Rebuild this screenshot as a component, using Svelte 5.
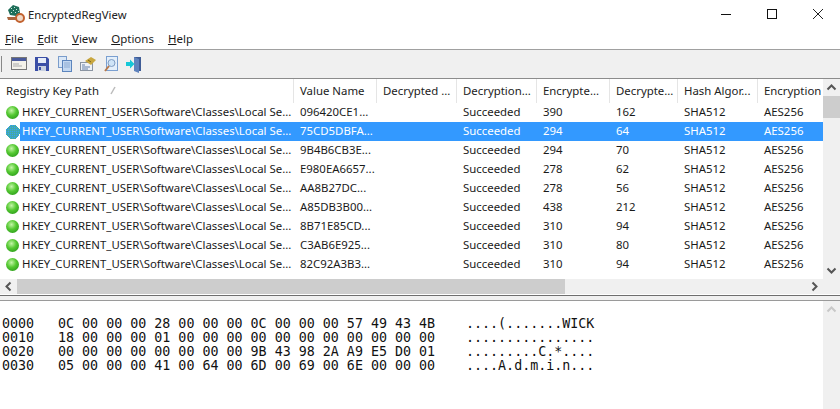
<script>
  const columns = [
    { label: 'Registry Key Path', width: 294 },
    { label: 'Value Name', width: 83 },
    { label: 'Decrypted ...', width: 80 },
    { label: 'Decryption...', width: 80 },
    { label: 'Encrypte...', width: 73 },
    { label: 'Decrypte...', width: 68 },
    { label: 'Hash Algor...', width: 80 },
    { label: 'Encryption', width: 65 }
  ];
  const keyPath = 'HKEY_CURRENT_USER\\Software\\Classes\\Local Se...';
  const rows = [
    ['096420CE1...', 390, 162],
    ['75CD5DBFA...', 294, 64],
    ['9B4B6CB3E...', 294, 70],
    ['E980EA6657...', 278, 62],
    ['AA8B27DC...', 278, 56],
    ['A85DB3B00...', 438, 212],
    ['8B71E85CD...', 310, 94],
    ['C3AB6E925...', 310, 80],
    ['82C92A3B3...', 310, 94]
  ];
  const menus = [
    ['F', 'ile'],
    ['E', 'dit'],
    ['V', 'iew'],
    ['O', 'ptions'],
    ['H', 'elp']
  ];
  const hex = [
    ['0000', '0C 00 00 00 28 00 00 00 0C 00 00 00 57 49 43 4B', '....(.......WICK'],
    ['0010', '18 00 00 00 01 00 00 00 00 00 00 00 00 00 00 00', '................'],
    ['0020', '00 00 00 00 00 00 00 00 9B 43 98 2A A9 E5 D0 01', '.........C.*....'],
    ['0030', '05 00 00 00 41 00 64 00 6D 00 69 00 6E 00 00 00', '....A.d.m.i.n...']
  ];
</script>

<div class="window">
  <header class="titlebar">
    <svg class="appicon" width="20" height="20" viewBox="0 0 20 20">
      <path d="M7 1l6 2 1 6-4 3-6-1-2-5z" fill="#1f6f5a" />
      <path d="M5 4h1v1H5zM8 3h1v1H8zM10 5h1v1h-1zM7 6h1v1H7zM5 8h1v1H5zM9 8h1v1H9zM12 7h1v1h-1z" fill="#cfe8dc" />
      <path d="M1 13h9v3H2z" fill="#a9663f" />
      <circle cx="14" cy="14" r="4" fill="#f0d9c8" stroke="#c2622f" stroke-width="2" />
    </svg>
    <span class="title">EncryptedRegView</span>
    <div class="winbtns">
      <svg width="12" height="12" viewBox="0 0 12 12"><path d="M1 6.500h10" stroke="#111" fill="none" /></svg>
      <svg width="12" height="12" viewBox="0 0 12 12"><rect x="1.500" y="1.500" width="9" height="9" stroke="#111" fill="none" /></svg>
      <svg width="12" height="12" viewBox="0 0 12 12"><path d="M1 1l10 10M11 1L1 11" stroke="#222" fill="none" /></svg>
    </div>
  </header>

  <nav class="menubar">
    {#each menus as m}
      <span class="menu"><u>{m[0]}</u>{m[1]}</span>
    {/each}
  </nav>

  <div class="toolbar">
    <span class="grip"></span>
    <svg width="18" height="18" viewBox="0 0 18 18">
      <rect x="1.500" y="2.500" width="15" height="12" fill="#f4f2ea" stroke="#777" />
      <rect x="2" y="3" width="14" height="3" fill="#4a5a9c" />
      <path d="M3 9h6M3 11h9" stroke="#aaa" />
    </svg>
    <svg width="18" height="18" viewBox="0 0 18 18">
      <path d="M2 2h12l2 2v12H2z" fill="#3a4ea6" />
      <rect x="5" y="3" width="8" height="5" fill="#e6ecf8" />
      <rect x="5" y="11" width="8" height="5" fill="#c8d0e0" />
      <rect x="6" y="12" width="2" height="3" fill="#3a4ea6" />
    </svg>
    <svg width="18" height="18" viewBox="0 0 18 18">
      <rect x="2.500" y="1.500" width="8" height="11" fill="#dbe8f7" stroke="#7a9ccb" />
      <rect x="6.500" y="5.500" width="9" height="11" fill="#c3d8f1" stroke="#5c85bd" />
      <path d="M8 8h6M8 10h6M8 12h6" stroke="#8dabd2" />
    </svg>
    <svg width="18" height="18" viewBox="0 0 18 18">
      <rect x="1.500" y="7.500" width="12" height="8" fill="#eef1f6" stroke="#8a94a1" />
      <path d="M3 10h3M3 12h8M3 14h6" stroke="#6480aa" />
      <path d="M6 6l6-4 5 3-5 5z" fill="#c9a73f" />
      <path d="M9 5l3 2" stroke="#7a6420" />
    </svg>
    <svg width="18" height="18" viewBox="0 0 18 18">
      <rect x="4.500" y="1.500" width="11" height="14" fill="#e4effa" stroke="#7a9fd0" />
      <circle cx="9.500" cy="8" r="3.500" fill="#cfe4f7" stroke="#7f9cc2" />
      <path d="M7 11l-4 5" stroke="#b8794a" stroke-width="2" />
    </svg>
    <svg width="18" height="18" viewBox="0 0 18 18">
      <path d="M9 2h7v14H9z" fill="#3f5c96" />
      <path d="M9 2l5 2v14l-5-2z" fill="#5f83bd" />
      <path d="M1 7h4V4.500L9.500 9 5 13.500V11H1z" fill="#16c8d8" />
    </svg>
  </div>

  <section class="listview">
    <div class="listmain">
      <div class="headrow">
        {#each columns as c, i}
          <div class="headcell" style="width: {c.width}px">
            <span>{c.label}</span>
            {#if i === 0}
              <svg class="sort" width="8" height="9" viewBox="0 0 8 9"><path d="M2 8l4-7" stroke="#bbb" stroke-width="1.500" fill="none" /></svg>
            {/if}
          </div>
        {/each}
      </div>
      {#each rows as r, i}
        <div class="row" class:selected={i === 1}>
          <div class="cell first" style="width: {columns[0].width}px">
            {#if i === 1}
              <svg class="ballsel" width="14" height="14" viewBox="0 0 14 14" shape-rendering="crispEdges">
                <defs>
                  <pattern id="dither" width="2" height="2" patternUnits="userSpaceOnUse">
                    <rect width="2" height="2" fill="#46b3a0" />
                    <rect width="1" height="1" fill="#3399ff" />
                    <rect x="1" y="1" width="1" height="1" fill="#3f9fb0" />
                  </pattern>
                </defs>
                <circle cx="7" cy="7" r="7" fill="url(#dither)" />
              </svg>
            {:else}
              <span class="ball"></span>
            {/if}
            <span class="keytext">{keyPath}</span>
          </div>
          <div class="cell" style="width: {columns[1].width}px">{r[0]}</div>
          <div class="cell" style="width: {columns[2].width}px"></div>
          <div class="cell" style="width: {columns[3].width}px">Succeeded</div>
          <div class="cell" style="width: {columns[4].width}px">{r[1]}</div>
          <div class="cell" style="width: {columns[5].width}px">{r[2]}</div>
          <div class="cell" style="width: {columns[6].width}px">SHA512</div>
          <div class="cell" style="width: {columns[7].width}px">AES256</div>
        </div>
      {/each}
    </div>
    <div class="vscroll">
      <svg class="arrow" width="17" height="17" viewBox="0 0 17 17"><path d="M4.500 10.500l4-4 4 4" stroke="#555" stroke-width="2" fill="none" /></svg>
      <div class="vthumb"></div>
      <div class="spacer"></div>
      <svg class="arrow" width="17" height="17" viewBox="0 0 17 17"><path d="M4.500 6.500l4 4 4-4" stroke="#555" stroke-width="2" fill="none" /></svg>
    </div>
  </section>

  <div class="hscroll">
    <svg class="arrow" width="17" height="15" viewBox="0 0 17 15"><path d="M10.500 3.500l-4 4 4 4" stroke="#555" stroke-width="2" fill="none" /></svg>
    <div class="hthumb"></div>
    <div class="spacer"></div>
    <svg class="arrow" width="17" height="15" viewBox="0 0 17 15"><path d="M6.500 3.500l4 4-4 4" stroke="#555" stroke-width="2" fill="none" /></svg>
    <div class="corner"></div>
  </div>

  <div class="splitter"></div>

  <section class="hexpane">
    <div class="hexlines">
      {#each hex as h}
        <div class="hexline"><span class="addr">{h[0]}</span><span class="bytes">{h[1]}</span><span>{h[2]}</span></div>
      {/each}
    </div>
    <div class="hexscroll">
      <svg class="arrow" width="17" height="17" viewBox="0 0 17 17"><path d="M4.500 10.500l4-4 4 4" stroke="#c8c8c8" stroke-width="2" fill="none" /></svg>
    </div>
  </section>
</div>

<style>
  :global(body) {
    margin: 0;
    background: #fff;
  }
  .window {
    width: 840px;
    height: 409px;
    display: flex;
    flex-direction: column;
    overflow: hidden;
    font-family: "Noto Sans", "Open Sans", sans-serif;
    font-size: 11.4px;
    color: #1a1a1a;
    background: #fff;
  }
  .titlebar {
    height: 28px;
    flex: none;
    display: flex;
    align-items: center;
    padding-left: 6px;
    box-sizing: border-box;
  }
  .appicon {
    margin-right: 2px;
  }
  .title {
    font-size: 11.3px;
    color: #222;
  }
  .winbtns {
    margin-left: auto;
    display: flex;
    gap: 34px;
    padding-right: 16px;
  }
  .menubar {
    height: 21px;
    flex: none;
    display: flex;
    align-items: center;
    padding-left: 5px;
    gap: 14px;
    border-bottom: 1px solid #a0a0a0;
    font-size: 11.5px;
  }
  .toolbar {
    height: 29px;
    flex: none;
    display: flex;
    align-items: center;
    gap: 5px;
    padding-left: 1px;
    background: #f0f0f0;
    border-bottom: 1px solid #8c8c8c;
    box-sizing: border-box;
  }
  .grip {
    width: 1px;
    height: 16px;
    background: #888;
    margin-right: 3px;
  }
  .listview {
    height: 200px;
    flex: none;
    display: flex;
  }
  .listmain {
    width: 823px;
    overflow: hidden;
  }
  .headrow {
    height: 24px;
    display: flex;
  }
  .headcell {
    flex: none;
    box-sizing: border-box;
    display: flex;
    align-items: center;
    padding: 0 0 2px 6px;
    border-right: 1px solid #e5e5e5;
    color: #222;
    white-space: nowrap;
    gap: 10px;
  }
  .headcell:last-child {
    border-right: none;
  }
  .sort {
    margin-top: 1px;
  }
  .row {
    height: 19px;
    display: flex;
    align-items: flex-start;
    white-space: nowrap;
    background: #fff;
  }
  .row.selected {
    background: #3399ff;
    color: #fff;
  }
  .cell {
    flex: none;
    box-sizing: border-box;
    padding-left: 6px;
    line-height: 17px;
  }
  .cell.first {
    display: flex;
    align-items: center;
    height: 19px;
    padding-left: 6px;
    background: #fff;
  }
  .keytext {
    flex: 1;
    padding: 0 0 2px 2px;
    line-height: 17px;
    margin-left: 1px;
  }
  .row.selected .keytext {
    background: #3399ff;
    color: #fff;
  }
  .ball {
    width: 13px;
    height: 13px;
    border-radius: 50%;
    background: radial-gradient(circle at 42% 35%, #c4f5a8 0%, #55c932 42%, #1a8a10 100%);
    flex: none;
  }
  .ballsel {
    flex: none;
    margin: 0 -1px 0 0;
  }
  .vscroll,
  .hexscroll {
    width: 17px;
    flex: none;
    display: flex;
    flex-direction: column;
    background: #f0f0f0;
  }
  .arrow {
    flex: none;
    display: block;
  }
  .vthumb {
    height: 22px;
    flex: none;
    background: #cdcdcd;
  }
  .spacer {
    flex: 1;
  }
  .hscroll {
    height: 15px;
    flex: none;
    display: flex;
    background: #f0f0f0;
  }
  .hthumb {
    width: 548px;
    flex: none;
    background: #cdcdcd;
  }
  .corner {
    width: 17px;
    flex: none;
  }
  .splitter {
    height: 4px;
    flex: none;
    margin-top: 1px;
    background: #f0f0f0;
    border-top: 1px solid #6e6e6e;
    border-bottom: 1px solid #9a9a9a;
  }
  .hexpane {
    flex: 1;
    display: flex;
    min-height: 0;
  }
  .hexlines {
    width: 823px;
    padding: 16px 0 0 2px;
    box-sizing: border-box;
    font-family: "DejaVu Sans Mono", monospace;
    font-size: 13.33px;
    line-height: 14px;
    color: #111;
  }
  .hexline {
    display: flex;
    white-space: pre;
  }
  .addr {
    width: 56px;
  }
  .bytes {
    width: 408px;
  }
</style>
